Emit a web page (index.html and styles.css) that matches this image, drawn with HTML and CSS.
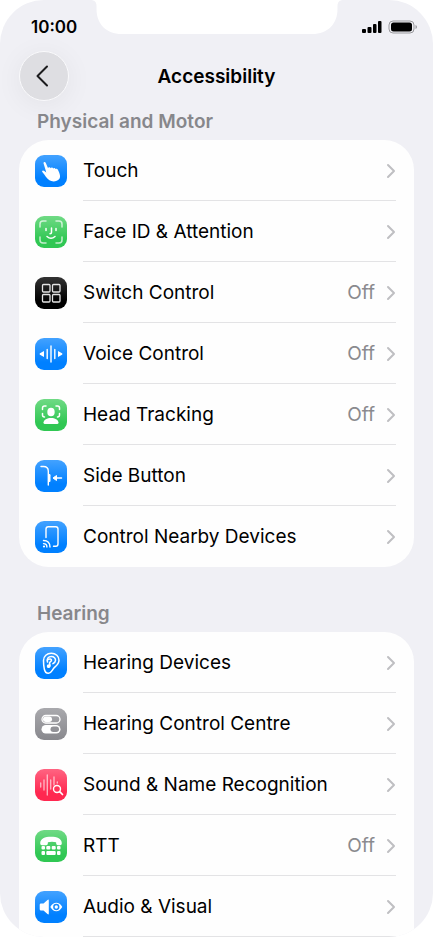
FILE: index.html
```html
<!DOCTYPE html>
<html lang="en-GB">
<head>
<meta charset="utf-8">
<meta name="viewport" content="width=device-width, initial-scale=1">
<title>Accessibility</title>
<link rel="stylesheet" href="styles.css">
</head>
<body>
<svg class="defs" width="0" height="0" aria-hidden="true">
  <symbol id="chevron" viewBox="0 0 10 16"><path d="M2 2l6 6-6 6" fill="none" stroke="currentColor" stroke-width="2" stroke-linecap="round" stroke-linejoin="round"/></symbol>
</svg>
<div class="screen">
  <svg class="notch" viewBox="0 0 253 35" width="253" height="35" aria-hidden="true"><path d="M0 0C4 0 6 2 6 6v3C6 24 16 34 31 34h191c15 0 25-10 25-25V6c0-4 2-6 6-6z" fill="#fff"/></svg>
  <div class="status">
    <span class="time">10:00</span>
    <svg width="56" height="14" viewBox="0 0 56 14" aria-label="Signal and battery">
      <rect x="1" y="9" width="4" height="4" rx="1"/><rect x="6.500" y="7" width="4" height="6" rx="1"/><rect x="12" y="4" width="3.500" height="9" rx="1"/><rect x="17" y="1" width="3.500" height="12" rx="1"/>
      <rect x="28" y="1" width="25" height="12" rx="4" fill="none" stroke="#99999d"/><rect x="30" y="2.500" width="21" height="9" rx="2.500"/><path d="M54.500 5v4q1.500-.5 1.500-2t-1.500-2z" fill="#99999d"/>
    </svg>
  </div>
  <header class="nav">
    <button class="back" type="button" aria-label="Back"><svg width="14" height="24" viewBox="0 0 14 24"><path d="M12 2.500L2.500 12l9.500 9.500" fill="none" stroke="#1c1c1e" stroke-width="2" stroke-linecap="round" stroke-linejoin="round"/></svg></button>
    <h1>Accessibility</h1>
  </header>
  <main>
    <section>
      <h2>Physical and Motor</h2>
      <ul class="card">
        <li><a class="row" href="#touch">
          <svg class="icon blue" viewBox="0 0 32 32"><path d="M8.600 8.600c-.6-1.700 1.500-2.300 2.100-.8l2.400 5.500c.1-1.400 2.200-1.300 2.500 0 .5-1.200 2.200-1 2.500.3.600-1 2.100-.7 2.400.5.700-.9 2-.4 2.500.8 1.700 3.300 3 6.700 1.200 9.100-2 2.700-7 3.100-9.800 1.300-2.400-1.500-4.800-5.600-6.900-8.100-1.200-1.500.5-2.400 1.800-1.200l2 1.600z" fill="#fff"/></svg>
          <span class="label">Touch</span><svg class="chev"><use href="#chevron"/></svg></a></li>
        <li><a class="row" href="#face">
          <svg class="icon green" viewBox="0 0 32 32"><g fill="none" stroke="#fff" stroke-linecap="round" stroke-width="1.500"><path opacity=".7" d="M5 11V8q0-3 3-3h3M21 5h3q3 0 3 3v3M27 21v3q0 3-3 3h-3M11 27H8q-3 0-3-3v-3"/><path d="M11 12.500v2M21 12.500v2M16.500 12v4.500q0 1.200-1.500 1.200M12 20.500q4 3.500 8 0"/></g></svg>
          <span class="label">Face ID &amp; Attention</span><svg class="chev"><use href="#chevron"/></svg></a></li>
        <li><a class="row" href="#switch">
          <svg class="icon black" viewBox="0 0 32 32"><g fill="none" stroke="#e4e4e4" stroke-width="1.300"><rect x="7.500" y="7.500" width="7.500" height="7.500" rx="1"/><rect x="17.500" y="7.500" width="7.500" height="7.500" rx="1"/><rect x="7.500" y="17.500" width="7.500" height="7.500" rx="1"/><rect x="17.500" y="17.500" width="7.500" height="7.500" rx="1"/></g></svg>
          <span class="label">Switch Control</span><span class="value">Off</span><svg class="chev"><use href="#chevron"/></svg></a></li>
        <li><a class="row" href="#voice">
          <svg class="icon blue" viewBox="0 0 32 32"><path d="M12.200 11.500v9M16 8v16M19.800 11.500v9" stroke="#fff" stroke-width="1.400" stroke-linecap="round"/><path d="M9 13v6l-4-2.200q-1-.8 0-1.600zM23 13v6l4-2.200q1-.8 0-1.600z" fill="#fff"/></svg>
          <span class="label">Voice Control</span><span class="value">Off</span><svg class="chev"><use href="#chevron"/></svg></a></li>
        <li><a class="row" href="#head">
          <svg class="icon green" viewBox="0 0 32 32"><path d="M7.500 10.500V9q0-2 2-2h1.500M21 7h1.500q2 0 2 2v1.500M7.500 14.500V16q0 2 2 2M24.500 14.500V16q0 2-2 2" fill="none" stroke="#fff" stroke-width="1.500" stroke-linecap="round"/><ellipse cx="16" cy="13" rx="3.700" ry="4.300" fill="#fff"/><path d="M8.500 23.500c.5-3 3.500-4.500 7.500-4.500s7 1.500 7.500 4.500q.1 1.500-1.500 1.500H10q-1.600 0-1.500-1.500z" fill="#fff"/></svg>
          <span class="label">Head Tracking</span><span class="value">Off</span><svg class="chev"><use href="#chevron"/></svg></a></li>
        <li><a class="row" href="#side">
          <svg class="icon blue" viewBox="0 0 32 32"><path d="M6 6.500h2.500q4.800 0 4.800 4.800V25" fill="none" stroke="#fff" stroke-width="1.400" stroke-linecap="round"/><path d="M14 14h.5q1 0 1 1.300v5.400q0 1.300-1 1.300H14z" fill="#fff"/><path d="M20 18h6.500" stroke="#fff" stroke-width="1.500" stroke-linecap="round"/><path d="M21.500 15.500v5l-3.500-2.500z" fill="#fff" stroke="#fff" stroke-linejoin="round"/></svg>
          <span class="label">Side Button</span><svg class="chev"><use href="#chevron"/></svg></a></li>
        <li><a class="row" href="#nearby">
          <svg class="icon blue" viewBox="0 0 32 32"><g fill="none" stroke="#fff" stroke-width="1.400" stroke-linecap="round"><path d="M11 16.500V8q0-2.200 2.200-2.200h7.600Q23 5.800 23 8v15q0 2.200-2.200 2.200H18.500"/><path d="M8.500 19.500q6.500 0 6.500 6.500M8.500 22.600q3.400 0 3.400 3.400"/></g><circle cx="9" cy="25.500" r="1.100" fill="#fff"/></svg>
          <span class="label">Control Nearby Devices</span><svg class="chev"><use href="#chevron"/></svg></a></li>
      </ul>
    </section>
    <section>
      <h2>Hearing</h2>
      <ul class="card">
        <li><a class="row" href="#hearing">
          <svg class="icon blue" viewBox="0 0 32 32"><g fill="none" stroke="#fff" stroke-width="1.500" stroke-linecap="round" stroke-linejoin="round"><path d="M9.300 22c-.7-3-.8-6-.8-8.500C8.500 9.200 12 6.300 16.300 6.300c4.500 0 7.700 3 7.700 7 0 3.200-2 5-4.200 6.800-2.700 2.200-2.900 6-6.300 6.200-2.200.1-3.700-1.700-4.200-4.300z"/><path d="M12.500 15c-1-3.500 1-5.500 3.800-5.500 2.700 0 4.400 1.800 4.200 4-.1 1.800-1.500 2.600-2.600 3.200"/><path d="M13.500 12.500c1-1 3-.6 3 .8 0 1.200-2 1.400-2 2.800 0 1.200.9 1.700.5 3-.3 1.200-1.800 1.500-2.400.5"/></g><circle cx="13.500" cy="19" r="1.700" fill="#fff"/></svg>
          <span class="label">Hearing Devices</span><svg class="chev"><use href="#chevron"/></svg></a></li>
        <li><a class="row" href="#control-centre">
          <svg class="icon gray" viewBox="0 0 32 32"><rect x="7" y="7.500" width="18" height="7.500" rx="3.750" fill="none" stroke="#fff" stroke-width="1.300"/><rect x="8" y="8.500" width="9" height="5.500" rx="2.750" fill="#fff"/><rect x="6.500" y="17" width="19" height="8.500" rx="4.250" fill="#fff"/><rect x="15.500" y="18.500" width="8.500" height="5.500" rx="2.750" fill="#929297"/></svg>
          <span class="label">Hearing Control Centre</span><svg class="chev"><use href="#chevron"/></svg></a></li>
        <li><a class="row" href="#sound">
          <svg class="icon red" viewBox="0 0 32 32"><path d="M5.700 14v4M9 11v10M12.300 6v20M15.700 11v9M19 8v8M22.300 13v1" stroke="#fff" stroke-opacity=".6" stroke-width="1.400" stroke-linecap="round"/><circle cx="22" cy="20" r="3.500" fill="#ff3459" stroke="#fff" stroke-width="1.400"/><path d="M24.700 22.700l2.800 2.800" stroke="#fff" stroke-width="1.700" stroke-linecap="round"/></svg>
          <span class="label">Sound &amp; Name Recognition</span><svg class="chev"><use href="#chevron"/></svg></a></li>
        <li><a class="row" href="#rtt">
          <svg class="icon green" viewBox="0 0 32 32"><g fill="#fff"><path d="M5.200 13.500C5 8.700 10 6.800 16 6.800s11 1.900 10.800 6.700q0 1.700-1.600 1.700h-2.400q-1.500 0-1.600-1.400l-.1-1.500q-4.100-1.300-8.200 0l-.1 1.500q-.1 1.400-1.600 1.400H6.800q-1.600 0-1.600-1.700z"/><rect x="6.500" y="16" width="3.500" height="3.500" rx="1"/><rect x="11.300" y="16" width="4" height="3.500" rx="1"/><rect x="16.700" y="16" width="4" height="3.500" rx="1"/><rect x="22" y="16" width="3.500" height="3.500" rx="1"/><rect x="6.500" y="21" width="3.500" height="4" rx="1"/><rect x="11.300" y="21" width="9.400" height="4" rx="1"/><rect x="22" y="21" width="3.500" height="4" rx="1"/></g></svg>
          <span class="label">RTT</span><span class="value">Off</span><svg class="chev"><use href="#chevron"/></svg></a></li>
        <li><a class="row" href="#audio">
          <svg class="icon blue" viewBox="0 0 32 32"><path d="M6 12.500h2.500l4-3.600q1.300-.9 1.300.7v12.800q0 1.600-1.300.7l-4-3.600H6q-1.300 0-1.300-1.300v-4.400q0-1.300 1.300-1.300z" fill="#fff"/><path d="M15.300 16q2.500-4.200 6-4.200t6 4.200q-2.500 4.200-6 4.200t-6-4.200z" fill="#fff"/><circle cx="21.300" cy="16" r="2.400" fill="#fff" stroke="#168bff" stroke-width="1.500"/></svg>
          <span class="label">Audio &amp; Visual</span><svg class="chev"><use href="#chevron"/></svg></a></li>
        <li><span class="row"></span></li>
      </ul>
    </section>
  </main>
</div>
</body>
</html>
```
FILE: styles.css
```css
* { box-sizing: border-box; }
body {
  margin: 0;
  background: #fff;
  color: #000;
  font-family: Inter, "Liberation Sans", sans-serif;
}
.defs { position: absolute; }
.screen {
  position: relative;
  height: 100vh;
  overflow: hidden;
  background: #f0f0f5;
  border-radius: 44px;
}
.notch {
  position: absolute;
  top: 0;
  left: 50%;
  transform: translateX(-50%);
}
.status {
  display: flex;
  justify-content: space-between;
  align-items: center;
  height: 51px;
  padding: 3px 16px 0 31px;
}
.time { font-size: 17px; font-weight: 600; }
.nav {
  display: grid;
  grid-template-columns: 50px 1fr 50px;
  align-items: center;
  height: 50px;
  padding: 0 19px;
}
.back {
  display: grid;
  place-items: center;
  width: 50px;
  height: 50px;
  padding: 0 4px 0 0;
  border: 1px solid #fafafc;
  border-radius: 50%;
  background: #dedee2;
  box-shadow: 0 4px 28px rgba(0, 0, 0, 0.06);
}
h1 {
  margin: 0;
  padding-top: 2px;
  text-align: center;
  font-size: 19px;
  line-height: 24px;
  font-weight: 600;
}
h2 {
  position: relative;
  margin: 0;
  padding: 1px 18px 6px;
  font-size: 19px;
  line-height: 24px;
  font-weight: 600;
  color: #87878b;
}
main {
  display: flex;
  flex-direction: column;
  gap: 34px;
  padding: 8px 19px 0;
}
.card {
  list-style: none;
  margin: 0;
  padding: 0 0 0 16px;
  border-radius: 30px;
  background: #fefefe;
}
.row {
  position: relative;
  display: flex;
  align-items: center;
  height: 61px;
  padding-right: 18px;
  color: inherit;
  text-decoration: none;
  font-size: 19px;
  line-height: 24px;
}
li + li .row::before {
  content: "";
  position: absolute;
  top: -1px;
  left: 48px;
  right: 18px;
  height: 1px;
  background: #e3e3e5;
}
.icon {
  flex: none;
  width: 32px;
  height: 32px;
  border-radius: 9px;
  margin-right: 16px;
}
.blue { background: linear-gradient(#43a2ff, #0080ff 75%); }
.green { background: linear-gradient(#70da85, #30c753 75%); }
.black { background: linear-gradient(#333, #000 75%); }
.gray { background: linear-gradient(#a9a9ad, #88888d); }
.red { background: linear-gradient(#ff6482, #ff2850 75%); }
.label,
.value { padding-top: 1px; }
.label { flex: 1; white-space: nowrap; }
.value { color: #8a8a8e; margin-right: 11px; }
.chev {
  flex: none;
  width: 10px;
  height: 16px;
  color: #bfbfc2;
}
```
